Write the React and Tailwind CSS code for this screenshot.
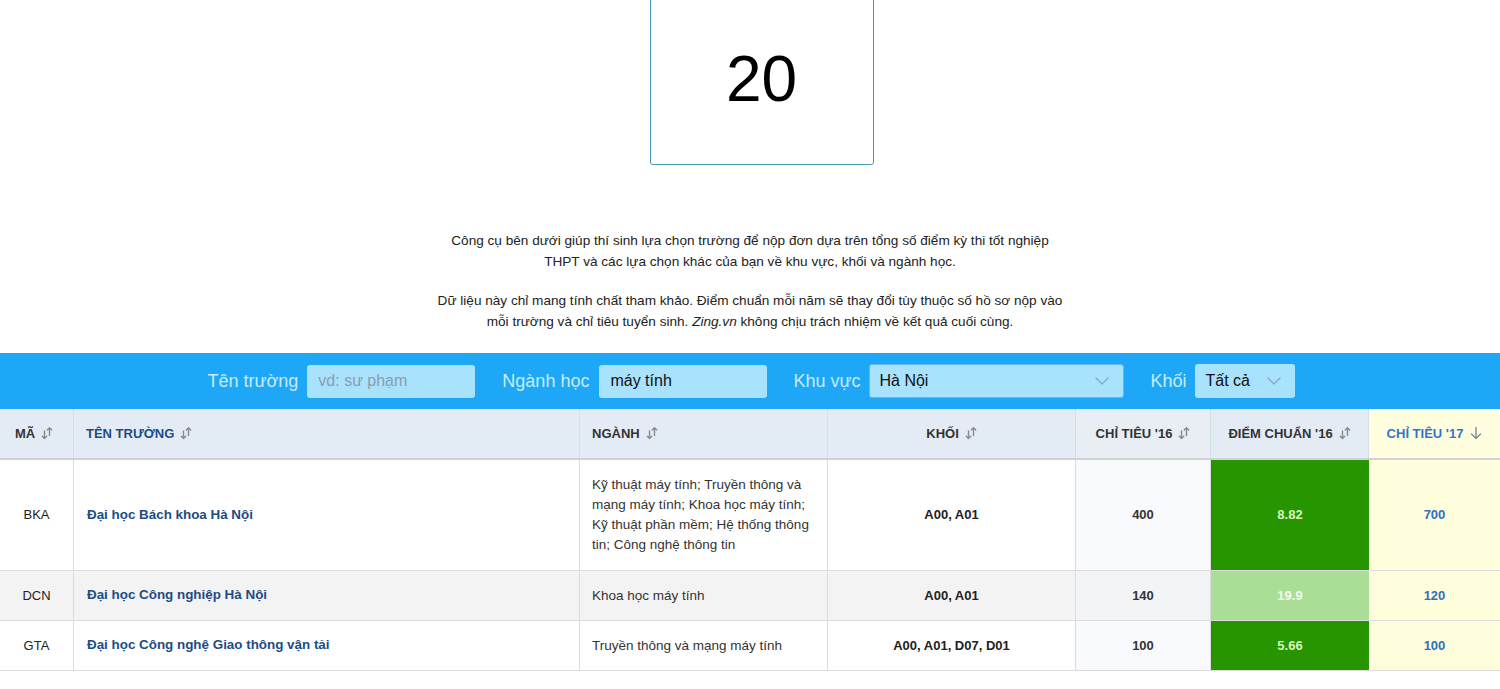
import React from "react";

function SortIcon() {
  return (
    <svg width="12" height="14" viewBox="0 0 12 14" className="inline-block ml-[6px] -mt-[2px] align-middle" fill="none" stroke="#8a8a8a" strokeWidth="1.4" strokeLinecap="round" strokeLinejoin="round">
      <path d="M3.5 5v7.5M1.3 10.3l2.2 2.2 2.2-2.2" />
      <path d="M8.5 9.5V1.8M6.3 4 8.5 1.8 10.7 4" />
    </svg>
  );
}

function DownIcon() {
  return (
    <svg width="12" height="14" viewBox="0 0 12 14" className="inline-block ml-[7px] -mt-[2px] align-middle" fill="none" stroke="#7d8a99" strokeWidth="1.4" strokeLinecap="round" strokeLinejoin="round">
      <path d="M6 1.5v11M1.5 8l4.5 4.5L10.5 8" />
    </svg>
  );
}

function Chevron() {
  return (
    <svg width="14" height="8" viewBox="0 0 14 8" fill="none" stroke="#7fa9c6" strokeWidth="1.3" strokeLinecap="round" strokeLinejoin="round">
      <path d="M1 1l6 6 6-6" />
    </svg>
  );
}

const rows = [
  {
    ma: "BKA",
    ten: "Đại học Bách khoa Hà Nội",
    nganh: "Kỹ thuật máy tính; Truyền thông và mạng máy tính; Khoa học máy tính; Kỹ thuật phần mềm; Hệ thống thông tin; Công nghệ thông tin",
    khoi: "A00, A01",
    ct16: "400",
    dc16: "8.82",
    dark: true,
    ct17: "700",
    h: "h-[111px]",
    bg: "bg-white",
    ctbg: "bg-[#f8fafd]",
  },
  {
    ma: "DCN",
    ten: "Đại học Công nghiệp Hà Nội",
    nganh: "Khoa học máy tính",
    khoi: "A00, A01",
    ct16: "140",
    dc16: "19.9",
    dark: false,
    ct17: "120",
    h: "h-[50px]",
    bg: "bg-[#f3f3f3]",
    ctbg: "bg-[#f3f4f6]",
  },
  {
    ma: "GTA",
    ten: "Đại học Công nghệ Giao thông vận tải",
    nganh: "Truyền thông và mạng máy tính",
    khoi: "A00, A01, D07, D01",
    ct16: "100",
    dc16: "5.66",
    dark: true,
    ct17: "100",
    h: "h-[50px]",
    bg: "bg-white",
    ctbg: "bg-[#f8fafd]",
  },
];

export default function App() {
  return (
    <div className="w-[1500px] min-h-[689px] bg-white overflow-hidden" style={{ fontFamily: '"Liberation Sans", Arial, sans-serif' }}>
      {/* score box */}
      <div className="flex justify-center">
        <div className="w-[224px] h-[175px] -mt-[10px] ml-[23px] border-[1.5px] border-[#4b98b4] rounded-b-[3px] flex items-center justify-center pt-[2px]">
          <span className="text-[64px] leading-none text-black">20</span>
        </div>
      </div>

      {/* intro text */}
      <div className="mt-[65px] flex justify-center">
        <div className="w-[680px] text-center text-[13.6px] leading-[21px] text-[#222]">
          <p>
            Công cụ bên dưới giúp thí sinh lựa chọn trường để nộp đơn dựa trên tổng số điểm kỳ thi tốt nghiệp
            <br />
            THPT và các lựa chọn khác của bạn về khu vực, khối và ngành học.
          </p>
          <p className="mt-[18px]">
            Dữ liệu này chỉ mang tính chất tham khảo. Điểm chuẩn mỗi năm sẽ thay đổi tùy thuộc số hồ sơ nộp vào
            <br />
            mỗi trường và chỉ tiêu tuyển sinh. <i>Zing.vn</i> không chịu trách nhiệm về kết quả cuối cùng.
          </p>
        </div>
      </div>

      {/* filter bar */}
      <div className="mt-[21px] h-[56px] bg-[#1ea7f7] flex items-center justify-center">
        <div className="flex items-center ml-[2px]">
          <span className="text-[18px] text-[#c6ecff]">Tên trường</span>
          <div className="ml-[9px] w-[168px] h-[33px] rounded-[3px] bg-[#a9e2fd] flex items-center px-[11px] text-[16px] text-[#8a9eab]">vd: sư phạm</div>
          <span className="ml-[27px] text-[18px] text-[#c6ecff]">Ngành học</span>
          <div className="ml-[10px] w-[168px] h-[33px] rounded-[3px] bg-[#a9e2fd] flex items-center px-[11px] text-[16px] text-[#111]">máy tính</div>
          <span className="ml-[26px] text-[18px] text-[#c6ecff]">Khu vực</span>
          <div className="ml-[8px] w-[255px] h-[34px] rounded-[3px] bg-[#a9e2fd] border border-[#63b8ee] flex items-center justify-between pl-[10px] pr-[14px] text-[16px] text-[#111]">
            <span>Hà Nội</span>
            <Chevron />
          </div>
          <span className="ml-[27px] text-[18px] text-[#c6ecff]">Khối</span>
          <div className="ml-[8px] w-[100px] h-[34px] rounded-[3px] bg-[#a9e2fd] flex items-center justify-between pl-[11px] pr-[14px] text-[16px] text-[#111]">
            <span>Tất cả</span>
            <Chevron />
          </div>
        </div>
      </div>

      {/* table */}
      <div className="flex h-[51px] bg-[#e3ecf4] border-b-2 border-[#cfd3d6] text-[13px] font-bold">
        <div className="w-[74px] flex items-center pl-[15px] text-[#333] border-r border-[#d6dde3]">MÃ<SortIcon /></div>
        <div className="w-[506px] flex items-center pl-[12px] text-[#1b4c86] border-r border-[#d6dde3]">TÊN TRƯỜNG<SortIcon /></div>
        <div className="w-[248px] flex items-center pl-[12px] text-[#333] border-r border-[#d6dde3]">NGÀNH<SortIcon /></div>
        <div className="w-[248px] flex items-center justify-center text-[#333] border-r border-[#d6dde3]">KHỐI<SortIcon /></div>
        <div className="w-[135px] flex items-center justify-center text-[#333] border-r border-[#d6dde3] bg-[#e8eef4]">CHỈ TIÊU '16<SortIcon /></div>
        <div className="w-[158px] flex items-center justify-center text-[#333] border-r border-[#d6dde3]">ĐIỂM CHUẨN '16<SortIcon /></div>
        <div className="flex-1 flex items-center justify-center text-[#2f77c8] bg-[#fffedf]">CHỈ TIÊU '17<DownIcon /></div>
      </div>

      {rows.map((r) => (
        <div key={r.ma} className={`flex ${r.h} ${r.bg} border-b border-[#dcdcdc]`}>
          <div className="w-[74px] flex items-center justify-center text-[13px] text-[#222] border-r border-[#dcdcdc]">{r.ma}</div>
          <div className="w-[506px] flex items-center pl-[13px] text-[13.4px] font-bold text-[#1b4c86] border-r border-[#dcdcdc]">{r.ten}</div>
          <div className="w-[248px] flex items-center pl-[12px] pr-[10px] text-[13.5px] leading-[20px] text-[#333] border-r border-[#dcdcdc]">{r.nganh}</div>
          <div className="w-[248px] flex items-center justify-center text-[13px] font-bold text-[#222] border-r border-[#dcdcdc]">{r.khoi}</div>
          <div className={`w-[135px] flex items-center justify-center text-[13px] font-bold text-[#333] border-r border-[#dcdcdc] ${r.ctbg}`}>{r.ct16}</div>
          <div className={`w-[158px] flex items-center justify-center text-[13px] font-bold ${r.dark ? "bg-[#269500] text-[#d6f7bd]" : "bg-[#aadd96] text-[#f2fbef]"}`}>{r.dc16}</div>
          <div className="flex-1 flex items-center justify-center text-[13px] font-bold text-[#2f6fbf] bg-[#fffedc]">{r.ct17}</div>
        </div>
      ))}
    </div>
  );
}
